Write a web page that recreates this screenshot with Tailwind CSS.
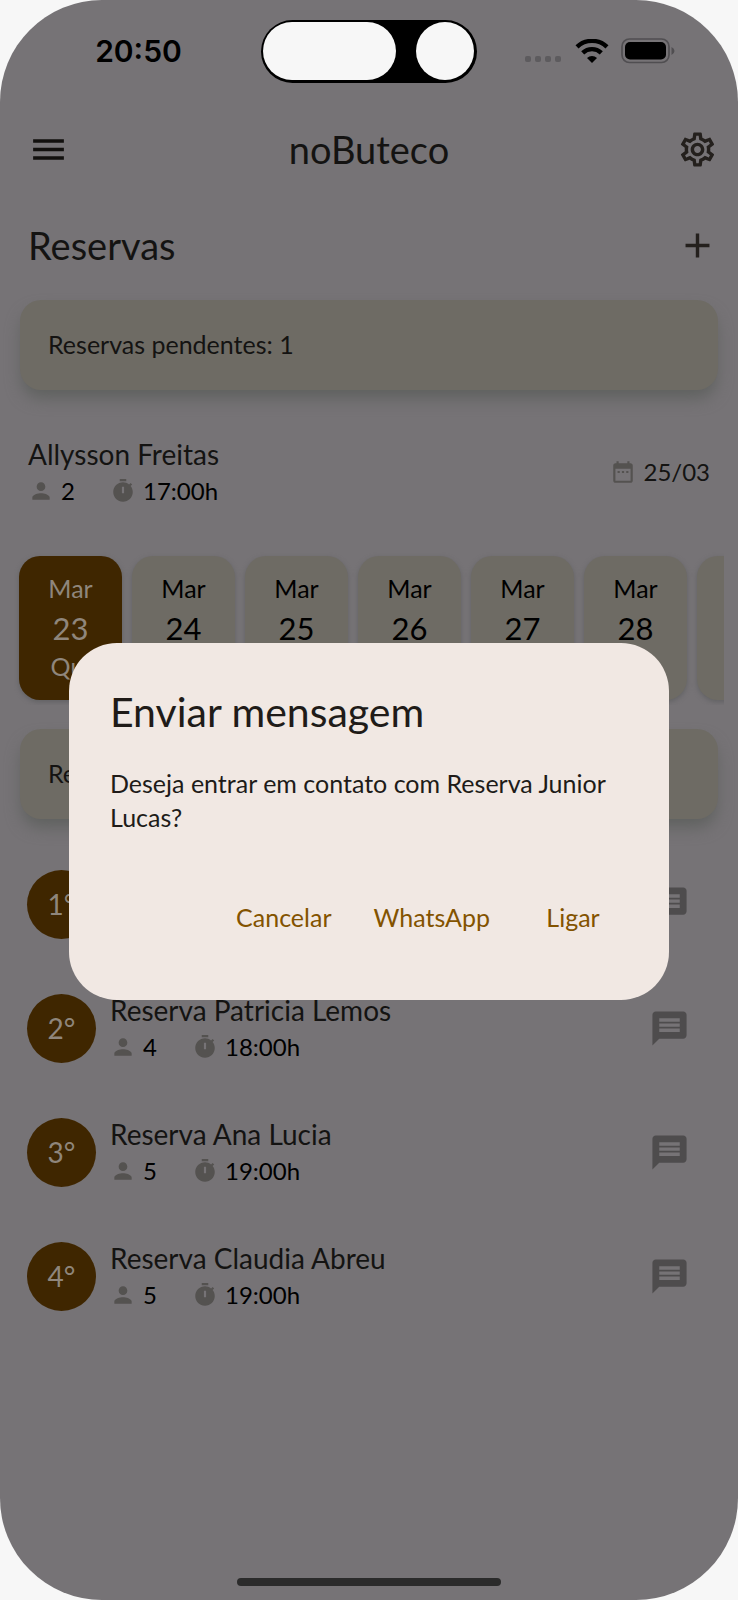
<!DOCTYPE html>
<html lang="pt-BR">
<head>
<meta charset="utf-8">
<meta name="viewport" content="width=device-width, initial-scale=1">
<title>noButeco</title>
<script src="https://cdn.jsdelivr.net/npm/@tailwindcss/browser@4"></script>
</head>
<body class="bg-[#f7f7f7] font-['Lato',sans-serif]">
<svg class="hidden" aria-hidden="true">
  <symbol id="person" viewBox="0 0 24 24"><path d="M12 12c2.21 0 4-1.79 4-4s-1.79-4-4-4-4 1.79-4 4 1.79 4 4 4zm0 2c-2.67 0-8 1.34-8 4v2h16v-2c0-2.66-5.33-4-8-4z"/></symbol>
  <symbol id="timer" viewBox="0 0 24 24"><path d="M15 1H9v2h6V1zm4.03 6.39l1.42-1.42c-.43-.51-.9-.99-1.41-1.41l-1.42 1.42C16.07 4.74 14.12 4 12 4c-4.97 0-9 4.03-9 9s4.02 9 9 9 9-4.03 9-9c0-2.12-.74-4.07-1.97-5.61zM13 14h-2V8h2v6z"/></symbol>
  <symbol id="message" viewBox="0 0 24 24"><path d="M20 2H4c-1.1 0-1.99.9-1.99 2L2 22l4-4h14c1.1 0 2-.9 2-2V4c0-1.1-.9-2-2-2zm-2 12H6v-2h12v2zm0-3H6V9h12v2zm0-3H6V6h12v2z"/></symbol>
</svg>
<div class="relative flex min-h-screen flex-col overflow-hidden rounded-[102px] bg-[#767376] text-[#141312]">
  <div class="flex h-[100px] items-center pt-[2px]">
    <div class="flex flex-1 justify-center pl-4 font-['Inter',sans-serif] text-[30px] font-semibold text-black">20:50</div>
    <div class="flex h-[63px] w-[216px] items-center justify-between rounded-full bg-black pr-[3px] pl-[2px]">
      <span class="h-[58px] w-[133px] rounded-full bg-[#f7f7f7]"></span>
      <span class="size-[58px] rounded-full bg-[#f7f7f7]"></span>
    </div>
    <div class="flex flex-1 items-center justify-center pr-4">
      <div class="mr-[14px] flex gap-1 pt-4">
        <span class="size-[6px] rounded-[2px] bg-[#5d5b5e]"></span><span class="size-[6px] rounded-[2px] bg-[#5d5b5e]"></span><span class="size-[6px] rounded-[2px] bg-[#5d5b5e]"></span><span class="size-[6px] rounded-[2px] bg-[#5d5b5e]"></span>
      </div>
      <svg class="mr-3 h-6 w-[34px]" viewBox="0 0 34 24" fill="none" stroke="#000" aria-label="Wi-Fi"><path d="M2 7.800A22 22 0 0 1 32 7.800" stroke-width="4.400"/><path d="M7.700 13.800A13.500 13.500 0 0 1 26.300 13.800" stroke-width="4.400"/><path d="M17 24l-5-5a7.300 7.300 0 0 1 10 0z" fill="#000" stroke="none"/></svg>
      <svg class="h-[26px] w-[54px]" viewBox="0 0 54 26" aria-label="Bateria"><rect x="1" y="1" width="47" height="23.500" rx="7.500" fill="none" stroke="#504e51" stroke-width="1.700"/><rect x="4" y="4" width="41" height="17.500" rx="5" fill="#000"/><path d="M50.500 9v8q3-1.500 3-4t-3-4z" fill="#504e51"/></svg>
    </div>
  </div>

  <header class="grid h-[98px] grid-cols-[1fr_auto_1fr] items-center pr-5 pl-7">
    <button type="button" aria-label="Menu" class="justify-self-start text-[#12100e]"><svg class="size-[41px]" viewBox="0 0 24 24" fill="currentColor"><path d="M3 18h18v-2H3v2zm0-5h18v-2H3v2zm0-7v2h18V6H3z"/></svg></button>
    <h1 class="pr-2 text-[38px]">noButeco</h1>
    <button type="button" aria-label="Configurações" class="justify-self-end text-[#24201d]"><svg class="size-[41px]" viewBox="0 0 24 24" fill="currentColor"><path d="M19.430 12.980c.04-.32.07-.64.07-.98 0-.34-.03-.66-.07-.98l2.110-1.650c.19-.15.24-.42.12-.64l-2-3.460c-.09-.16-.26-.25-.44-.25-.06 0-.12.01-.17.03l-2.490 1c-.52-.4-1.080-.73-1.690-.98l-.38-2.650C14.460 2.180 14.250 2 14 2h-4c-.25 0-.46.18-.49.42l-.38 2.650c-.61.25-1.170.59-1.690.98l-2.490-1c-.06-.02-.12-.03-.18-.03-.17 0-.34.09-.43.25l-2 3.460c-.13.22-.07.49.12.64l2.110 1.650c-.04.32-.07.65-.07.98 0 .33.03.66.07.98l-2.110 1.650c-.19.15-.24.42-.12.64l2 3.460c.09.16.26.25.44.25.06 0 .12-.01.17-.03l2.490-1c.52.4 1.080.73 1.690.98l.38 2.650c.03.24.24.42.49.42h4c.25 0 .46-.18.49-.42l.38-2.650c.61-.25 1.170-.59 1.690-.98l2.490 1c.06.02.12.03.18.03.17 0 .34-.09.43-.25l2-3.460c.12-.22.07-.49-.12-.64l-2.110-1.650zm-1.980-1.710c.04.31.05.52.05.73 0 .21-.02.43-.05.73l-.14 1.130.89.7 1.080.84-.7 1.210-1.270-.51-1.040-.42-.9.68c-.43.32-.84.56-1.250.73l-1.060.43-.16 1.130-.2 1.350h-1.400l-.19-1.350-.16-1.130-1.060-.43c-.43-.18-.83-.41-1.230-.71l-.91-.7-1.060.43-1.270.51-.7-1.210 1.080-.84.89-.7-.14-1.130c-.03-.31-.05-.54-.05-.74s.02-.43.05-.73l.14-1.130-.89-.7-1.080-.84.7-1.210 1.270.51 1.040.42.9-.68c.43-.32.84-.56 1.250-.73l1.060-.43.16-1.130.2-1.350h1.390l.19 1.350.16 1.130 1.060.43c.43.18.83.41 1.230.71l.91.7 1.060-.43 1.270-.51.7 1.210-1.070.85-.89.7.14 1.130zM12 8c-2.210 0-4 1.790-4 4s1.790 4 4 4 4-1.790 4-4-1.790-4-4-4zm0 6c-1.100 0-2-.9-2-2s.9-2 2-2 2 .9 2 2-.9 2-2 2z"/></svg></button>
  </header>

  <main>
    <div class="flex h-[94px] items-center justify-between pr-5 pl-7">
      <h2 class="text-[38px]">Reservas</h2>
      <button type="button" aria-label="Adicionar reserva" class="text-[#24201d]"><svg class="size-[41px]" viewBox="0 0 24 24" fill="currentColor"><path d="M19 13h-6v6h-2v-6H5v-2h6V5h2v6h6v2z"/></svg></button>
    </div>

    <div class="mx-5 mt-2 flex h-[90px] items-center rounded-[21px] bg-[#6e6b64] px-7 text-[25px] shadow-[0_10px_16px_-2px_#5f615f]">Reservas pendentes: 1</div>

    <div class="mt-[45px] flex items-center justify-between px-7">
      <div>
        <div class="text-[28px] leading-[38px]">Allysson Freitas</div>
        <div class="flex h-9 items-center text-[24px] text-black">
          <svg class="mr-[7px] size-[26px] fill-[#545250]"><use href="#person"/></svg><span class="w-[49px]">2</span>
          <svg class="mr-[7px] size-[26px] fill-[#545250]"><use href="#timer"/></svg><span>17:00h</span>
        </div>
      </div>
      <div class="flex items-center text-[24px]"><svg class="mr-[7px] size-[26px] fill-[#545250]" viewBox="0 0 24 24"><path d="M9 11H7v2h2v-2zm4 0h-2v2h2v-2zm4 0h-2v2h2v-2zm2-7h-1V2h-2v2H8V2H6v2H5c-1.110 0-1.990.9-1.990 2L3 20c0 1.100.89 2 2 2h14c1.100 0 2-.9 2-2V6c0-1.100-.9-2-2-2zm0 16H5V9h14v11z"/></svg>25/03</div>
    </div>

    <div class="mx-[14px] mt-[42px] flex gap-[10px] overflow-hidden px-[5px] py-[5px] text-center text-[25px] text-black">
      <button type="button" class="h-36 w-[103px] shrink-0 rounded-[21px] bg-[#3f2600] pb-1 text-[#8f867c] shadow-[0_2px_5px_#626264]"><span class="block leading-10">Mar</span><span class="block text-[31px] leading-10">23</span><span class="block leading-9">Qui</span></button>
      <button type="button" class="h-36 w-[103px] shrink-0 rounded-[21px] bg-[#6e6b64] pb-1 shadow-[0_2px_5px_#626264]"><span class="block leading-10">Mar</span><span class="block text-[31px] leading-10">24</span><span class="block leading-9">Sex</span></button>
      <button type="button" class="h-36 w-[103px] shrink-0 rounded-[21px] bg-[#6e6b64] pb-1 shadow-[0_2px_5px_#626264]"><span class="block leading-10">Mar</span><span class="block text-[31px] leading-10">25</span><span class="block leading-9">Sáb</span></button>
      <button type="button" class="h-36 w-[103px] shrink-0 rounded-[21px] bg-[#6e6b64] pb-1 shadow-[0_2px_5px_#626264]"><span class="block leading-10">Mar</span><span class="block text-[31px] leading-10">26</span><span class="block leading-9">Dom</span></button>
      <button type="button" class="h-36 w-[103px] shrink-0 rounded-[21px] bg-[#6e6b64] pb-1 shadow-[0_2px_5px_#626264]"><span class="block leading-10">Mar</span><span class="block text-[31px] leading-10">27</span><span class="block leading-9">Seg</span></button>
      <button type="button" class="h-36 w-[103px] shrink-0 rounded-[21px] bg-[#6e6b64] pb-1 shadow-[0_2px_5px_#626264]"><span class="block leading-10">Mar</span><span class="block text-[31px] leading-10">28</span><span class="block leading-9">Ter</span></button>
      <button type="button" aria-label="Próximo dia" class="h-36 w-[103px] shrink-0 rounded-[21px] bg-[#6e6b64] shadow-[0_2px_5px_#626264]"></button>
    </div>

    <div class="mx-5 mt-6 flex h-[90px] items-center rounded-[21px] bg-[#6e6b64] px-7 text-[25px] shadow-[0_10px_16px_-2px_#5f615f]">Reservas</div>

    <ul class="mt-[23px]">
      <li class="flex h-[124px] items-center pr-12 pl-[27px]">
        <span class="flex size-[69px] items-center justify-center rounded-full bg-[#3f2600] text-[28px] text-[#8f867c]">1°</span>
        <div class="ml-[14px] flex-1">
          <div class="text-[28px] leading-[38px]">Reserva Junior Lucas</div>
          <div class="h-9"></div>
        </div>
        <button type="button" aria-label="Enviar mensagem"><svg class="size-[41px] fill-[#4e4c4d]"><use href="#message"/></svg></button>
      </li>
      <li class="flex h-[124px] items-center pr-12 pl-[27px]">
        <span class="flex size-[69px] items-center justify-center rounded-full bg-[#3f2600] text-[28px] text-[#8f867c]">2°</span>
        <div class="ml-[14px] flex-1">
          <div class="text-[28px] leading-[38px]">Reserva Patricia Lemos</div>
          <div class="flex h-9 items-center text-[24px] text-black">
            <svg class="mr-[7px] size-[26px] fill-[#545250]"><use href="#person"/></svg><span class="w-[49px]">4</span>
            <svg class="mr-[7px] size-[26px] fill-[#545250]"><use href="#timer"/></svg><span>18:00h</span>
          </div>
        </div>
        <button type="button" aria-label="Enviar mensagem"><svg class="size-[41px] fill-[#4e4c4d]"><use href="#message"/></svg></button>
      </li>
      <li class="flex h-[124px] items-center pr-12 pl-[27px]">
        <span class="flex size-[69px] items-center justify-center rounded-full bg-[#3f2600] text-[28px] text-[#8f867c]">3°</span>
        <div class="ml-[14px] flex-1">
          <div class="text-[28px] leading-[38px]">Reserva Ana Lucia</div>
          <div class="flex h-9 items-center text-[24px] text-black">
            <svg class="mr-[7px] size-[26px] fill-[#545250]"><use href="#person"/></svg><span class="w-[49px]">5</span>
            <svg class="mr-[7px] size-[26px] fill-[#545250]"><use href="#timer"/></svg><span>19:00h</span>
          </div>
        </div>
        <button type="button" aria-label="Enviar mensagem"><svg class="size-[41px] fill-[#4e4c4d]"><use href="#message"/></svg></button>
      </li>
      <li class="flex h-[124px] items-center pr-12 pl-[27px]">
        <span class="flex size-[69px] items-center justify-center rounded-full bg-[#3f2600] text-[28px] text-[#8f867c]">4°</span>
        <div class="ml-[14px] flex-1">
          <div class="text-[28px] leading-[38px]">Reserva Claudia Abreu</div>
          <div class="flex h-9 items-center text-[24px] text-black">
            <svg class="mr-[7px] size-[26px] fill-[#545250]"><use href="#person"/></svg><span class="w-[49px]">5</span>
            <svg class="mr-[7px] size-[26px] fill-[#545250]"><use href="#timer"/></svg><span>19:00h</span>
          </div>
        </div>
        <button type="button" aria-label="Enviar mensagem"><svg class="size-[41px] fill-[#4e4c4d]"><use href="#message"/></svg></button>
      </li>
    </ul>
  </main>

  <div class="mx-auto mt-auto mb-[14px] h-2 w-[264px] rounded-full bg-[#2b2b2b]"></div>

  <div class="absolute inset-0 flex items-center px-[69px] pt-[101px] pb-[58px]">
    <div role="dialog" aria-modal="true" aria-labelledby="dialog-title" class="w-full rounded-[48px] bg-[#f1e8e3] p-[41px] text-[#201b18]">
      <h2 id="dialog-title" class="text-[41px] leading-[56px]">Enviar mensagem</h2>
      <p class="mt-[26px] text-[25px] leading-[34px]">Deseja entrar em contato com Reserva Junior Lucas?</p>
      <div class="mt-[43px] flex justify-end gap-[14px] text-[25px] text-[#835300]">
        <button type="button" class="h-[82px] px-[14px]">Cancelar</button>
        <button type="button" class="h-[82px] px-[14px]">WhatsApp</button>
        <button type="button" class="h-[82px] min-w-[110px] px-[14px]">Ligar</button>
      </div>
    </div>
  </div>
</div>
</body>
</html>
